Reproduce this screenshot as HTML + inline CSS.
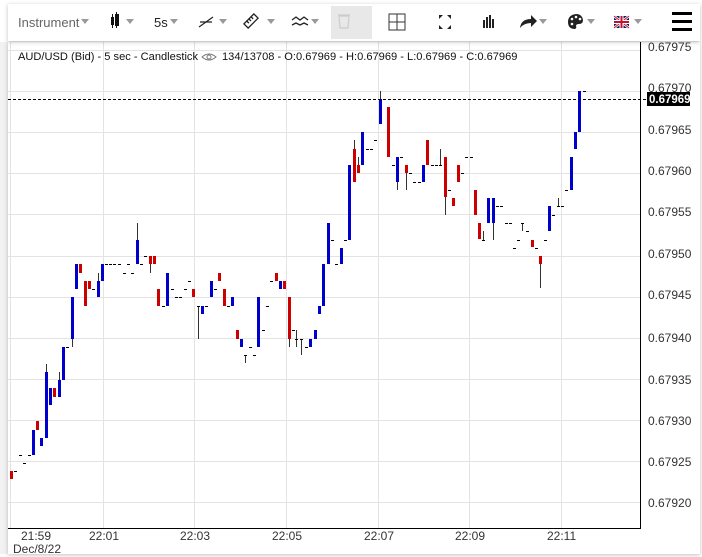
<!DOCTYPE html>
<html><head><meta charset="utf-8"><style>
html,body{margin:0;padding:0;background:#fff;width:702px;height:557px;overflow:hidden;font-family:"Liberation Sans",Arial,sans-serif}
</style></head><body>
<svg width="702" height="557" viewBox="0 0 702 557" xmlns="http://www.w3.org/2000/svg" font-family="Liberation Sans, Arial, sans-serif">
<defs><filter id="sh" x="-5%" y="-50%" width="110%" height="200%"><feDropShadow dx="0" dy="1" stdDeviation="2" flood-color="#000" flood-opacity="0.25"/></filter></defs>
<rect x="0" y="0" width="702" height="557" fill="#fff"/>
<rect x="0" y="42" width="8" height="512" fill="#f2f2f2"/>
<rect x="8" y="42" width="692" height="512" fill="#fff" filter="url(#sh)"/>
<g stroke="#e3e3e3" stroke-width="1">
<line x1="10.5" y1="42" x2="10.5" y2="528"/><line x1="103.5" y1="42" x2="103.5" y2="528"/><line x1="194.5" y1="42" x2="194.5" y2="528"/><line x1="286.5" y1="42" x2="286.5" y2="528"/><line x1="378.5" y1="42" x2="378.5" y2="528"/><line x1="469.5" y1="42" x2="469.5" y2="528"/><line x1="561.5" y1="42" x2="561.5" y2="528"/>
<line x1="8" y1="50.5" x2="640" y2="50.5"/><line x1="8" y1="91.5" x2="640" y2="91.5"/><line x1="8" y1="132.5" x2="640" y2="132.5"/><line x1="8" y1="173.5" x2="640" y2="173.5"/><line x1="8" y1="214.5" x2="640" y2="214.5"/><line x1="8" y1="256.5" x2="640" y2="256.5"/><line x1="8" y1="297.5" x2="640" y2="297.5"/><line x1="8" y1="338.5" x2="640" y2="338.5"/><line x1="8" y1="379.5" x2="640" y2="379.5"/><line x1="8" y1="420.5" x2="640" y2="420.5"/><line x1="8" y1="461.5" x2="640" y2="461.5"/><line x1="8" y1="502.5" x2="640" y2="502.5"/>
</g>
<line x1="640.5" y1="42" x2="640.5" y2="528" stroke="#000"/>
<line x1="8" y1="528.5" x2="641" y2="528.5" stroke="#000"/>
<g stroke="#333" stroke-width="1">
<line x1="46.5" y1="364" x2="46.5" y2="372"/><line x1="59.5" y1="372" x2="59.5" y2="380"/><line x1="72.5" y1="339" x2="72.5" y2="347"/><line x1="98.5" y1="273" x2="98.5" y2="281"/><line x1="137.5" y1="223" x2="137.5" y2="240"/><line x1="150.5" y1="264" x2="150.5" y2="273"/><line x1="198.5" y1="306" x2="198.5" y2="339"/>
<line x1="245.5" y1="355" x2="245.5" y2="363"/><line x1="289.5" y1="339" x2="289.5" y2="347"/><line x1="296.5" y1="330" x2="296.5" y2="347"/><line x1="301.5" y1="339" x2="301.5" y2="355"/><line x1="354.5" y1="140" x2="354.5" y2="149"/><line x1="358.5" y1="157" x2="358.5" y2="165"/><line x1="380.5" y1="91" x2="380.5" y2="99"/><line x1="397.5" y1="182" x2="397.5" y2="190"/><line x1="406.5" y1="173" x2="406.5" y2="190"/>
<line x1="440.5" y1="149" x2="440.5" y2="165"/><line x1="445.5" y1="197" x2="445.5" y2="215"/><line x1="483.5" y1="231" x2="483.5" y2="240"/><line x1="493.5" y1="223" x2="493.5" y2="240"/><line x1="522.5" y1="223" x2="522.5" y2="231"/><line x1="540.5" y1="264" x2="540.5" y2="288"/><line x1="558.5" y1="198" x2="558.5" y2="206"/>
</g>
<g fill="#0000cc">
<rect x="32" y="430" width="3" height="25"/><rect x="40" y="438" width="3" height="8"/><rect x="45" y="372" width="3" height="66"/><rect x="49" y="388" width="3" height="17"/><rect x="58" y="380" width="3" height="17"/><rect x="62" y="347" width="3" height="33"/><rect x="71" y="297" width="3" height="42"/><rect x="75" y="264" width="3" height="25"/><rect x="97" y="281" width="3" height="16"/><rect x="101" y="264" width="3" height="17"/><rect x="136" y="240" width="3" height="24"/><rect x="166" y="273" width="3" height="33"/><rect x="201" y="306" width="3" height="8"/><rect x="210" y="281" width="3" height="16"/><rect x="231" y="297" width="3" height="9"/>
<rect x="240" y="339" width="3" height="8"/><rect x="257" y="297" width="3" height="50"/><rect x="279" y="281" width="3" height="8"/><rect x="309" y="339" width="3" height="8"/><rect x="314" y="330" width="3" height="9"/><rect x="318" y="306" width="3" height="8"/><rect x="322" y="264" width="3" height="42"/><rect x="327" y="223" width="3" height="41"/><rect x="340" y="248" width="3" height="16"/><rect x="348" y="165" width="3" height="75"/><rect x="361" y="132" width="3" height="33"/><rect x="379" y="99" width="3" height="25"/><rect x="396" y="157" width="3" height="25"/><rect x="422" y="165" width="3" height="17"/>
<rect x="487" y="198" width="3" height="25"/><rect x="492" y="198" width="3" height="25"/><rect x="548" y="206" width="3" height="25"/><rect x="570" y="157" width="3" height="33"/><rect x="574" y="132" width="3" height="17"/><rect x="578" y="91" width="3" height="41"/>
</g>
<g fill="#cc0000">
<rect x="10" y="471" width="3" height="8"/><rect x="36" y="421" width="3" height="9"/><rect x="53" y="388" width="3" height="9"/><rect x="79" y="264" width="3" height="9"/><rect x="84" y="281" width="3" height="25"/><rect x="88" y="281" width="3" height="8"/><rect x="149" y="256" width="3" height="8"/><rect x="153" y="256" width="3" height="8"/><rect x="157" y="289" width="3" height="17"/><rect x="192" y="289" width="3" height="8"/><rect x="218" y="273" width="3" height="8"/><rect x="223" y="289" width="3" height="17"/><rect x="236" y="330" width="3" height="9"/>
<rect x="275" y="273" width="3" height="8"/><rect x="283" y="281" width="3" height="8"/><rect x="288" y="297" width="3" height="42"/><rect x="353" y="149" width="3" height="33"/><rect x="357" y="165" width="3" height="8"/><rect x="387" y="107" width="3" height="50"/><rect x="405" y="165" width="3" height="8"/><rect x="426" y="140" width="3" height="25"/><rect x="444" y="157" width="3" height="40"/><rect x="452" y="198" width="3" height="8"/><rect x="457" y="165" width="3" height="17"/><rect x="474" y="190" width="3" height="25"/><rect x="478" y="223" width="3" height="16"/><rect x="531" y="240" width="3" height="7"/><rect x="539" y="256" width="3" height="8"/>
</g>
<g fill="#000">
<rect x="14" y="471" width="3" height="1"/><rect x="19" y="455" width="3" height="1"/><rect x="23" y="463" width="3" height="1"/><rect x="28" y="455" width="3" height="1"/><rect x="66" y="347" width="3" height="1"/><rect x="92" y="289" width="3" height="1"/><rect x="105" y="264" width="3" height="1"/><rect x="109" y="264" width="3" height="1"/><rect x="113" y="264" width="3" height="1"/><rect x="118" y="264" width="3" height="1"/><rect x="123" y="273" width="3" height="1"/><rect x="127" y="264" width="3" height="1"/><rect x="131" y="273" width="3" height="1"/><rect x="140" y="264" width="3" height="1"/><rect x="144" y="256" width="3" height="1"/><rect x="162" y="306" width="3" height="1"/><rect x="171" y="289" width="3" height="1"/><rect x="175" y="297" width="3" height="1"/><rect x="179" y="297" width="3" height="1"/><rect x="184" y="289" width="3" height="1"/><rect x="188" y="281" width="3" height="1"/><rect x="197" y="306" width="3" height="1"/><rect x="205" y="306" width="3" height="1"/><rect x="214" y="289" width="3" height="1"/><rect x="227" y="306" width="3" height="1"/>
<rect x="244" y="355" width="3" height="1"/><rect x="249" y="347" width="3" height="1"/><rect x="253" y="355" width="3" height="1"/><rect x="262" y="330" width="3" height="1"/><rect x="266" y="306" width="3" height="1"/><rect x="270" y="281" width="3" height="1"/><rect x="292" y="330" width="3" height="1"/><rect x="295" y="339" width="3" height="1"/><rect x="300" y="339" width="3" height="1"/><rect x="305" y="347" width="3" height="1"/><rect x="331" y="240" width="3" height="1"/><rect x="335" y="264" width="3" height="1"/><rect x="344" y="240" width="3" height="1"/><rect x="366" y="149" width="3" height="1"/><rect x="370" y="149" width="3" height="1"/><rect x="374" y="140" width="3" height="1"/><rect x="392" y="165" width="3" height="1"/><rect x="400" y="157" width="3" height="1"/><rect x="409" y="173" width="3" height="1"/><rect x="413" y="182" width="3" height="1"/><rect x="418" y="182" width="3" height="1"/>
<rect x="431" y="165" width="3" height="1"/><rect x="435" y="165" width="3" height="1"/><rect x="439" y="165" width="3" height="1"/><rect x="448" y="190" width="3" height="1"/><rect x="461" y="173" width="3" height="1"/><rect x="465" y="157" width="3" height="1"/><rect x="470" y="157" width="3" height="1"/><rect x="482" y="240" width="3" height="1"/><rect x="496" y="206" width="3" height="1"/><rect x="500" y="206" width="3" height="1"/><rect x="505" y="223" width="3" height="1"/><rect x="509" y="223" width="3" height="1"/><rect x="513" y="248" width="3" height="1"/><rect x="517" y="240" width="3" height="1"/><rect x="521" y="223" width="3" height="1"/><rect x="526" y="231" width="3" height="1"/><rect x="535" y="248" width="3" height="1"/><rect x="544" y="240" width="3" height="1"/><rect x="552" y="215" width="3" height="1"/><rect x="557" y="206" width="3" height="1"/><rect x="561" y="206" width="3" height="1"/><rect x="565" y="190" width="3" height="1"/><rect x="583" y="91" width="3" height="1"/>
</g>
<line x1="8" y1="99.5" x2="646" y2="99.5" stroke="#000" stroke-dasharray="3,2"/>
<rect x="647" y="92" width="43" height="14" fill="#000"/>
<text x="649" y="103" font-size="11.5" font-weight="bold" fill="#fff">0.67969</text>
<g font-size="12" fill="#333">
<text x="648" y="51">0.67975</text><text x="648" y="92">0.67970</text><text x="648" y="134">0.67965</text><text x="648" y="175">0.67960</text><text x="648" y="216">0.67955</text><text x="648" y="258">0.67950</text><text x="648" y="299">0.67945</text><text x="648" y="342">0.67940</text><text x="648" y="384">0.67935</text><text x="648" y="425">0.67930</text><text x="648" y="466">0.67925</text><text x="648" y="507">0.67920</text>
</g>
<g font-size="12" fill="#333">
<text x="21" y="540">21:59</text><text x="13" y="553">Dec/8/22</text><text x="89" y="540">22:01</text><text x="180" y="540">22:03</text><text x="272" y="540">22:05</text><text x="364" y="540">22:07</text><text x="455" y="540">22:09</text><text x="547" y="540">22:11</text>
</g>
<text x="18" y="60" font-size="11.1" fill="#111">AUD/USD (Bid) - 5 sec - Candlestick</text>
<g transform="translate(209,57)" fill="none" stroke="#777" stroke-width="1"><path d="M-7 0 Q0 -6 7 0 Q0 6 -7 0Z"/><circle cx="0" cy="0" r="2"/></g>
<text x="222" y="60" font-size="11.1" fill="#111">134/13708 - O:0.67969 - H:0.67969 - L:0.67969 - C:0.67969</text>
<rect x="8" y="4" width="692" height="37" fill="#fff" filter="url(#sh)"/>
<text x="18" y="27" font-size="13" fill="#666">Instrument</text>
<g fill="#999"><path d="M81 19h8l-4 5z"/><path d="M126 19h8l-4 5z"/><path d="M170 19h8l-4 5z"/><path d="M219 19h8l-4 5z"/><path d="M267 19h8l-4 5z"/><path d="M311 19h8l-4 5z"/><path d="M361 19h8l-4 5z" fill="#ccc"/><path d="M539 19h8l-4 5z"/><path d="M587 19h8l-4 5z"/><path d="M634 19h8l-4 5z"/></g>
<g fill="#111"><rect x="111" y="17" width="3" height="8"/><rect x="115" y="14" width="4" height="12"/><rect x="112" y="14" width="1" height="14"/><rect x="116" y="12" width="1" height="16"/></g>
<text x="154" y="27" font-size="13" fill="#222">5s</text>
<path d="M199 27 L213 17 M200 22 h12" stroke="#222" stroke-width="1.2" fill="none"/>
<g transform="translate(251,21) rotate(-45)" fill="none" stroke="#222" stroke-width="1.3"><rect x="-7" y="-3" width="14" height="6"/><path d="M-3 -3v3M0 -3v3M3 -3v3"/></g>
<path d="M292 20l4-3 4 3 4-3 4 3M292 25l4-2 4 2 4-2 4 2" stroke="#222" stroke-width="1.3" fill="none"/>
<rect x="331" y="6" width="41" height="33" fill="#e8e8e8"/>
<path d="M339 16h10l-1 12h-8z M338 15h12" stroke="#ccc" stroke-width="1.2" fill="none"/>
<rect x="389" y="14" width="16" height="16" fill="none" stroke="#333" stroke-width="1"/><path d="M397 14v16M389 22h16" stroke="#333"/>
<g fill="#222"><path d="M439 15l4 0-4 4z M451 15l-4 0 4 4z M439 29l4 0-4-4z M451 29l-4 0 4-4z"/></g>
<g fill="#222"><rect x="483" y="20" width="2" height="8"/><rect x="486" y="17" width="2" height="11"/><rect x="489" y="15" width="2" height="13"/><rect x="492" y="19" width="2" height="9"/></g>
<path d="M520 28 Q521 19 531 19 L531 15 L537 21 L531 27 L531 23 Q524 23 520 28Z" fill="#222"/>
<path d="M576 14 Q568 15 568 22 Q568 29 575 29 Q577 28 576 26 Q576 24 579 24 Q583 24 583 20 Q582 14 576 14Z" fill="#222"/>
<g fill="#fff"><circle cx="572" cy="19" r="1.3"/><circle cx="576" cy="17" r="1.3"/><circle cx="580" cy="19" r="1.3"/><circle cx="572" cy="24" r="1.3"/></g>
<rect x="614" y="16" width="15" height="12" fill="#012169"/>
<path d="M614 16L629 28M629 16L614 28" stroke="#fff" stroke-width="2.5"/><path d="M614 16L629 28M629 16L614 28" stroke="#c8102e" stroke-width="1"/>
<path d="M621.5 16v12M614 22h15" stroke="#fff" stroke-width="4"/><path d="M621.5 16v12M614 22h15" stroke="#c8102e" stroke-width="2"/>
<g fill="#000"><rect x="672" y="12" width="20" height="3"/><rect x="672" y="20" width="20" height="3"/><rect x="672" y="28" width="20" height="3"/></g>
</svg>
</body></html>
